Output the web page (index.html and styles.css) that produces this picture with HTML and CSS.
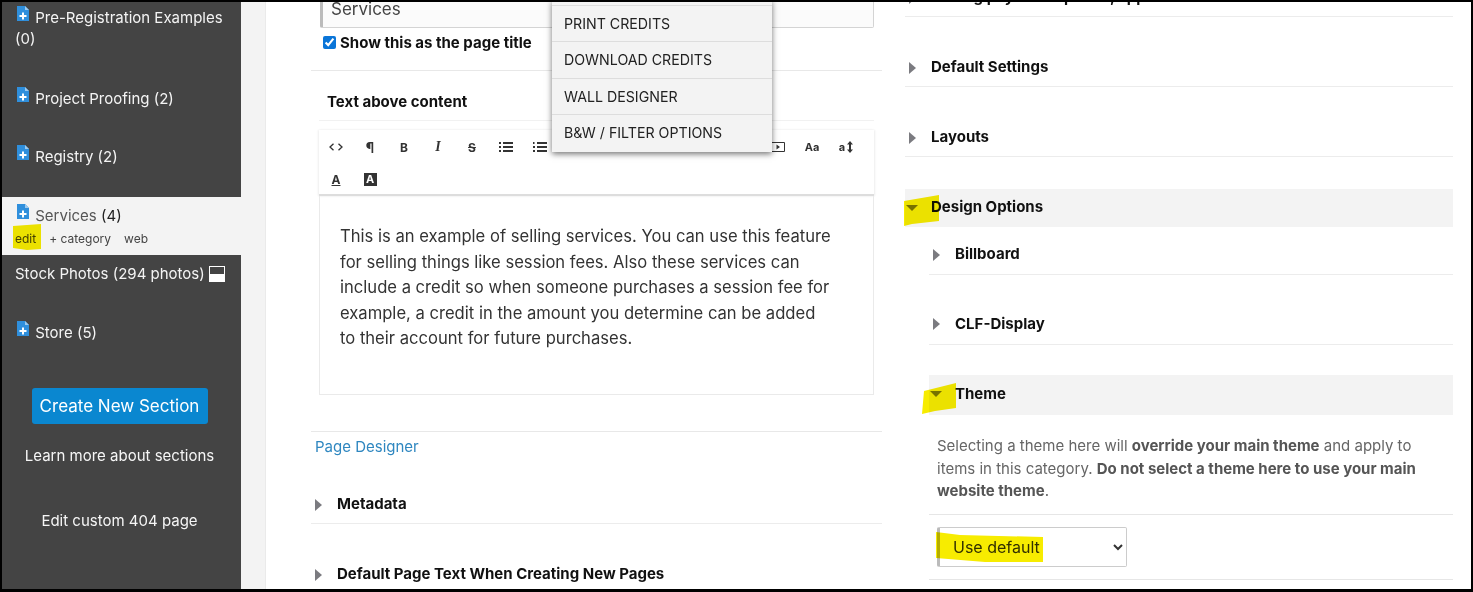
FILE: index.html
```html
<!DOCTYPE html>
<html lang="en">
<head>
<meta charset="utf-8">
<title>Services</title>
<link rel="stylesheet" href="styles.css">
</head>
<body>
<div class="frame">
  <aside class="sidebar">
    <ul class="sections">
      <li class="section"><svg class="doc" viewBox="0 0 12 15"><path d="M0 0H8L12 4V15H0Z" fill="#2f8fdc"/><path d="M8 0L12 4H8Z" fill="#9cc9ee"/><path d="M5 6.5H7V9H9.5V11H7V13.500H5V11H2.500V9H5Z" fill="#fff"/></svg> Pre-Registration Examples (0)</li>
      <li class="section"><svg class="doc" viewBox="0 0 12 15"><path d="M0 0H8L12 4V15H0Z" fill="#2f8fdc"/><path d="M8 0L12 4H8Z" fill="#9cc9ee"/><path d="M5 6.5H7V9H9.5V11H7V13.500H5V11H2.500V9H5Z" fill="#fff"/></svg> Project Proofing (2)</li>
      <li class="section"><svg class="doc" viewBox="0 0 12 15"><path d="M0 0H8L12 4V15H0Z" fill="#2f8fdc"/><path d="M8 0L12 4H8Z" fill="#9cc9ee"/><path d="M5 6.5H7V9H9.5V11H7V13.500H5V11H2.500V9H5Z" fill="#fff"/></svg> Registry (2)</li>
      <li class="section active">
        <div><svg class="doc" viewBox="0 0 12 15"><path d="M0 0H8L12 4V15H0Z" fill="#2f8fdc"/><path d="M8 0L12 4H8Z" fill="#9cc9ee"/><path d="M5 6.5H7V9H9.5V11H7V13.500H5V11H2.500V9H5Z" fill="#fff"/></svg> <span class="muted">Services</span> (4)</div>
        <div class="sublinks"><span>edit</span><span>+ category</span><span>web</span></div>
      </li>
      <li class="section">Stock Photos (294 photos) <span class="half"></span></li>
      <li class="section"><svg class="doc" viewBox="0 0 12 15"><path d="M0 0H8L12 4V15H0Z" fill="#2f8fdc"/><path d="M8 0L12 4H8Z" fill="#9cc9ee"/><path d="M5 6.5H7V9H9.5V11H7V13.500H5V11H2.500V9H5Z" fill="#fff"/></svg> Store (5)</li>
    </ul>
    <div class="side-actions">
      <a class="btn">Create New Section</a>
      <a class="side-link learn">Learn more about sections</a>
      <a class="side-link custom">Edit custom 404 page</a>
    </div>
  </aside>
  <div class="gutter"></div>
  <main class="main">
    <section class="col-left">
      <div class="title-input">Services</div>
      <label class="check"><input type="checkbox" checked> Show this as the page title</label>
      <hr class="rule">
      <h3 class="editor-label">Text above content</h3>
      <div class="editor">
        <div class="toolbar">
          <span class="tool"><svg class="code" viewBox="0 0 14 8"><path d="M4.500.7L1 4L4.500 7.300M9.500.7L13 4L9.500 7.300" fill="none" stroke="#333" stroke-width="1.300"/></svg></span>
          <span class="tool pilcrow">¶</span>
          <span class="tool">B</span>
          <span class="tool italic">I</span>
          <span class="tool strike">S</span>
          <span class="tool"><svg class="ico" viewBox="0 0 14 10"><path d="M0 0H2V2H0ZM4 0H14V2H4ZM0 4H2V6H0ZM4 4H14V6H4ZM0 8H2V10H0ZM4 8H14V10H4Z" fill="#333"/></svg></span>
          <span class="tool"><svg class="ico" viewBox="0 0 14 10"><path d="M0 0H1.500V2H0ZM4 0H14V2H4ZM0 4H2V6H0ZM4 4H14V6H4ZM0 8H2V10H0ZM4 8H14V10H4Z" fill="#333"/></svg></span>
          <span class="tool"></span><span class="tool"></span><span class="tool"></span><span class="tool"></span><span class="tool"></span><span class="tool"></span>
          <span class="tool"><svg class="ico" viewBox="0 0 14 10"><path d="M.5.500H13.500V9.500H.5Z" fill="none" stroke="#333"/><path d="M5.500 2.500L9 5L5.500 7.500Z" fill="#333"/></svg></span>
          <span class="tool small">Aa</span>
          <span class="tool small">a<svg class="updown" viewBox="0 0 6 12"><path d="M3 0L6 3.500H4V8.500H6L3 12L0 8.500H2V3.500H0Z" fill="#333"/></svg></span>
          <span class="tool under">A</span>
          <span class="tool"><span class="inverse">A</span></span>
        </div>
        <div class="editor-body">
          <p>This is an example of selling services. You can use this feature for selling things like session fees. Also these services can include a credit so when someone purchases a session fee for example, a credit in the amount you determine can be added to their account for future purchases.</p>
        </div>
      </div>
      <hr class="rule designer-rule">
      <a class="designer">Page Designer</a>
      <div class="row first-row"><i class="tri"></i>Metadata</div>
      <div class="row"><i class="tri"></i>Default Page Text When Creating New Pages</div>
    </section>
    <section class="col-right">
      <div class="row"><i class="tri"></i>Setting payment options, appearance</div>
      <div class="row"><i class="tri"></i>Default Settings</div>
      <div class="row"><i class="tri"></i>Layouts</div>
      <div class="open"><i class="tri down"></i>Design Options</div>
      <div class="nested">
        <div class="row"><i class="tri"></i>Billboard</div>
        <div class="row"><i class="tri"></i>CLF-Display</div>
        <div class="open theme"><i class="tri down"></i>Theme</div>
        <div class="theme-body">
          <p>Selecting a theme here will <b>override your main theme</b> and apply to items in this category. <b>Do not select a theme here to use your main website theme</b>.</p>
          <div class="select-wrap">
            <select class="select"><option>Use default</option></select>
          </div>
        </div>
      </div>
    </section>
  </main>
  <nav class="menu">
    <a>PRINT CREDITS</a>
    <a>DOWNLOAD CREDITS</a>
    <a>WALL DESIGNER</a>
    <a>B&amp;W / FILTER OPTIONS</a>
  </nav>
  <svg class="marker" viewBox="0 0 1473 592" aria-hidden="true">
    <path d="M13 226L41 224V249L27 250L13 248Z"/>
    <path d="M904 201L939 195V221L912 224L904 226Z"/>
    <path d="M924 391L956 383V408L935 411L922 414Z"/>
    <path d="M936 532L960 535L1043 537V562L985 562L936 558Z"/>
  </svg>
</div>
</body>
</html>
```
FILE: styles.css
```css
* { box-sizing: border-box; }
html, body { margin: 0; height: 100%; background: #000; }
body { font-family: Inter, "Liberation Sans", sans-serif; font-size: 15px; color: #111; }
.frame { position: relative; display: flex; width: 1473px; height: 592px; border: solid #000; border-width: 2px 2px 3px 2px; overflow: hidden; background: #fff; }

.sidebar { flex: 0 0 239px; background: #444; color: #f4f4f4; }
.sections { list-style: none; margin: -3.250px 0 0; padding: 0; }
.section { padding: 8px 13px 29.250px; line-height: 21.500px; }
.section:first-child { padding-bottom: 29.750px; }
.section.active { background: #f3f3f3; color: #222; padding-bottom: 0; height: 57.750px; line-height: 21px; }
.muted { color: #555; }
.doc { width: 12px; height: 15px; margin: -4px 2px 0 2px; vertical-align: 2px; }
.sublinks { display: flex; gap: 13px; font-size: 12px; line-height: 20px; color: #444; margin-top: 3px; }
.half { display: inline-block; width: 16px; height: 16px; margin-left: 0; margin-top: -3px; vertical-align: -3px; border: 1px solid #fff; background: linear-gradient(#444 0 50%, #fff 50%); }

.side-actions { display: flex; flex-direction: column; align-items: center; padding: 15.500px 4px 0 0; }
.btn { display: block; width: 176px; height: 36px; background: #0a87d0; color: #fff; border-radius: 3px; font-size: 17px; line-height: 36px; text-align: center; }
.side-link { display: block; line-height: 20px; color: #f6f6f6; }
.learn { margin-top: 22px; }
.custom { margin-top: 45px; }

.gutter { flex: 0 0 25px; background: #f3f3f3; border-right: 1px solid #eaeaea; }
.main { flex: 1; display: flex; padding-left: 45px; min-width: 0; }

.col-left { flex: 0 0 571px; margin-top: -15px; }
.title-input { height: 41px; margin: 0 8px 0 9px; padding: 10px 8px 0; border: 1px solid #d4d4d4; border-left: 3px solid #bbb; border-radius: 2px; background: #fbfbfb; color: #444; font-size: 17px; line-height: 22px; }
.check { display: flex; align-items: center; gap: 4px; margin: 4px 0 0 12px; height: 20px; font-weight: 700; color: #111; }
.check input { margin: 0; width: 13px; height: 13px; accent-color: #0a75d8; }
.rule { margin: 18px 0 0; border: 0; border-top: 1px solid #e8e8e8; }
.editor-label { margin: 20px 0 0 16px; font-size: 15px; line-height: 21px; font-weight: 700; }
.editor { margin: 8px 8px 0; border-top: 1px solid #f1f1f1; padding-top: 9px; }
.toolbar { display: flex; flex-wrap: wrap; height: 66px; padding-top: 1px; background: #fff; border-bottom: 2px solid #ddd; box-shadow: -1px 0 2px #eee, 1px 0 2px #eee; }
.tool { flex: 0 0 34px; height: 32px; display: flex; align-items: center; justify-content: center; font-size: 12px; font-weight: 700; color: #333; }
.code { width: 14px; height: 8px; }
.pilcrow { font-size: 14px; }
.italic { font-style: italic; font-family: "Liberation Serif", serif; font-size: 14px; }
.strike { text-decoration: line-through; }
.ico { width: 14px; height: 10px; }
.small { font-size: 11px; }
.under { text-decoration: underline; }
.updown { width: 6px; height: 12px; margin-left: 2px; }
.inverse { display: block; width: 13px; height: 13px; background: #333; color: #fff; font-size: 11px; line-height: 13px; text-align: center; }
.editor-body { height: 199px; padding: 28px 40px 0 20px; border: 1px solid #eaeaea; border-top: 0; }
.editor-body p { margin: 0; font-size: 16.600px; line-height: 25.500px; color: #333; }
.designer-rule { margin-top: 36px; }
.designer { display: block; margin: 5px 0 0 4px; color: #2f87c0; line-height: 20px; }

.row { position: relative; height: 70px; padding: 40px 0 0 26px; line-height: 20px; font-weight: 700; border-bottom: 1px solid #ececec; color: #111; }
.first-row { height: 67px; padding-top: 37px; }
.tri { position: absolute; left: 4px; top: 45px; width: 0; height: 0; border: solid transparent; border-width: 6px 0 6px 7px; border-left-color: #7b7b80; }
.first-row .tri { top: 42px; }
.tri.down { left: 1px; top: 16px; border-width: 6px 6.500px 0; border-color: #7b7b80 transparent transparent; }

.col-right { flex: 0 0 548px; margin-left: 23px; margin-top: -55px; }
.open { position: relative; height: 38px; margin-top: 32px; padding: 8px 0 0 26px; line-height: 20px; font-weight: 700; background: #f3f3f3; }
.nested { margin-left: 24px; }
.nested .row { padding-top: 39px; }
.nested .row .tri { top: 43px; }
.nested .row:first-child { height: 48px; padding-top: 17px; }
.nested .row:first-child .tri { top: 22px; }
.theme { height: 40px; margin-top: 30px; padding-top: 9px; }
.theme-body { padding: 20px 0 0; }
.theme-body p { margin: 0 8px; line-height: 22.500px; color: #666; }
.theme-body b { color: #555; }
.select-wrap { margin-top: 11px; padding: 12px 0 12px 8px; border-top: 1px solid #e6e6e6; border-bottom: 1px solid #e6e6e6; }
.select { display: block; width: 190px; height: 40px; padding-left: 9px; border: 1px solid #ccc; border-left: 3px solid #bbb; border-radius: 2px; background: #fff; color: #333; font: 16px Inter, "Liberation Sans", sans-serif; }

.menu { position: absolute; left: 550px; top: -2px; width: 220px; height: 152px; padding-top: 5px; background: #f3f3f3; box-shadow: 0 2px 6px rgba(0,0,0,.55); }
.menu a { display: block; height: 36.400px; padding-left: 12px; border-top: 1px solid #ddd; font-size: 14.200px; line-height: 35px; color: #222; }

.marker { position: absolute; left: -2px; top: -2px; width: 1473px; height: 592px; fill: #f7ec00; mix-blend-mode: multiply; pointer-events: none; }
```
